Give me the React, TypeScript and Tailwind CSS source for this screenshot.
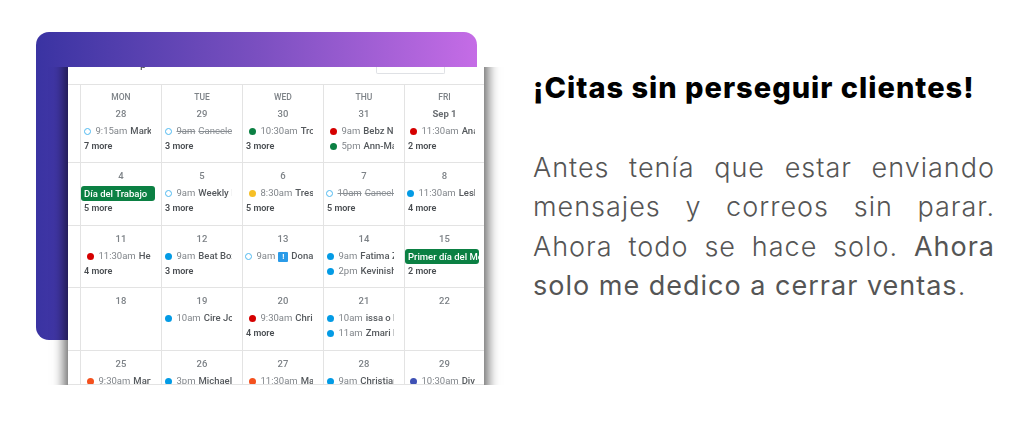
type Ev = { dot: string; ring?: boolean; time: string; title: string; at: number; strike?: boolean; alert?: boolean };
type Cell = { label?: string; day: string; bold?: boolean; chip?: string; events?: Ev[]; more?: string };

const blue = "#039be5";
const red = "#d50000";
const green = "#0b8043";
const orange = "#f4511e";
const sky = "#4fb8ef";

const rows: { h: string; cells: Cell[] }[] = [
  {
    h: "h-[78px]",
    cells: [
      { label: "MON", day: "28", events: [{ dot: sky, ring: true, time: "9:15am", title: "Mark Johnson", at: 7 }], more: "7 more" },
      { label: "TUE", day: "29", events: [{ dot: sky, ring: true, time: "9am", title: "Canceled event", at: 7, strike: true }], more: "3 more" },
      { label: "WED", day: "30", events: [{ dot: green, time: "10:30am", title: "Tro Williams", at: 10 }], more: "3 more" },
      { label: "THU", day: "31", events: [{ dot: red, time: "9am", title: "Bebz Nixon", at: 10 }, { dot: green, time: "5pm", title: "Ann-Marie", at: 10 }] },
      { label: "FRI", day: "Sep 1", bold: true, events: [{ dot: red, time: "11:30am", title: "Ana Maria", at: 9 }], more: "2 more" },
    ],
  },
  {
    h: "h-[63px]",
    cells: [
      { day: "4", chip: "Día del Trabajo", more: "5 more" },
      { day: "5", events: [{ dot: sky, ring: true, time: "9am", title: "Weekly Meeting", at: 7 }], more: "3 more" },
      { day: "6", events: [{ dot: "#f6bf26", time: "8:30am", title: "Tres Lopez", at: 10 }], more: "5 more" },
      { day: "7", events: [{ dot: sky, ring: true, time: "10am", title: "Canceled", at: 6, strike: true }], more: "5 more" },
      { day: "8", events: [{ dot: blue, time: "11:30am", title: "Leslie Ann", at: 6 }], more: "4 more" },
    ],
  },
  {
    h: "h-[62px]",
    cells: [
      { day: "11", events: [{ dot: red, time: "11:30am", title: "Henry Cole", at: 10 }], more: "4 more" },
      { day: "12", events: [{ dot: blue, time: "9am", title: "Beat Box Studio", at: 7 }], more: "3 more" },
      { day: "13", events: [{ dot: sky, ring: true, time: "9am", title: "Donald", at: 6, alert: true }] },
      { day: "14", events: [{ dot: blue, time: "9am", title: "Fatima Zahra", at: 7 }, { dot: blue, time: "2pm", title: "Kevinish", at: 7 }] },
      { day: "15", chip: "Primer día del Mes", more: "2 more" },
    ],
  },
  {
    h: "h-[63px]",
    cells: [
      { day: "18" },
      { day: "19", events: [{ dot: blue, time: "10am", title: "Cire Jones", at: 7 }] },
      { day: "20", events: [{ dot: red, time: "9:30am", title: "Chris Evans", at: 10 }], more: "4 more" },
      { day: "21", events: [{ dot: blue, time: "10am", title: "issa o Kim", at: 7 }, { dot: blue, time: "11am", title: "Zmari Khan", at: 7 }] },
      { day: "22" },
    ],
  },
  {
    h: "h-[34px]",
    cells: [
      { day: "25", events: [{ dot: orange, time: "9:30am", title: "Martin Ruiz", at: 10 }] },
      { day: "26", events: [{ dot: blue, time: "3pm", title: "Michael Reed", at: 7 }] },
      { day: "27", events: [{ dot: orange, time: "11:30am", title: "Maria Lee", at: 10 }] },
      { day: "28", events: [{ dot: blue, time: "9am", title: "Christian Ford", at: 7 }] },
      { day: "29", events: [{ dot: "#3f51b5", time: "10:30am", title: "Diva Stone", at: 9 }] },
    ],
  },
];

function EventRow({ e }: { e: Ev }) {
  return (
    <div className="flex h-[15px] w-[70px] items-center overflow-hidden whitespace-nowrap" style={{ paddingLeft: e.at - 4 }}>
      <span
        className="mr-[5px] h-[6.5px] w-[6.5px] shrink-0 rounded-full"
        style={e.ring ? { border: `1.2px solid ${e.dot}` } : { backgroundColor: e.dot }}
      />
      <span className={e.strike ? "flex items-center gap-[3px] text-[#8a8f94] line-through" : "flex items-center gap-[3px]"}>
        <span className="text-[#80858a]">{e.time}</span>
        {e.alert && (
          <span className="flex h-[10px] w-[10px] items-center justify-center rounded-[1px] bg-[#2a9be8] text-[8px] font-bold text-white">!</span>
        )}
        <span className={e.strike ? "text-[#8a8f94]" : "font-medium text-[#55595d]"}>{e.title}</span>
      </span>
    </div>
  );
}

function DayCell({ cell, last }: { cell: Cell; last: boolean }) {
  return (
    <div className={`overflow-hidden pt-[5px] ${last ? "" : "border-r border-[#e3e3e3]"}`}>
      {cell.label && <div className="h-[16px] text-center text-[8.5px] leading-[15px] font-medium text-[#7d8287]">{cell.label}</div>}
      <div className={`h-[15px] text-center text-[9.5px] leading-[15px] ${cell.bold ? "font-bold text-[#6a6e72]" : "font-medium text-[#7d8287]"}`}>
        {cell.day}
      </div>
      <div className="mt-[3px]">
        {cell.chip && (
          <div className="h-[15px] w-[74px] overflow-hidden rounded-[3px] bg-[#0b8043] pl-[3px] text-[9.5px] leading-[15px] font-medium whitespace-nowrap text-white">
            {cell.chip}
          </div>
        )}
        {cell.events?.map((e) => <EventRow key={e.time + e.title} e={e} />)}
        {cell.more && <div className="h-[15px] pl-[3px] text-[9px] leading-[15px] font-semibold text-[#4a4e52]">{cell.more}</div>}
      </div>
    </div>
  );
}

export default function App() {
  return (
    <div className="flex h-[427px] w-[1024px] items-start overflow-hidden bg-white">
      <div className="relative mt-[32px] ml-[36px] h-[308px] w-[441px] shrink-0 rounded-[13px] bg-gradient-to-r from-[#3a33a2] via-[#7a4fc0] to-[#c56ce6]">
        <div className="absolute top-[35px] left-[8px] h-[318px] w-[461px] overflow-hidden">
          <div className="-mt-[20px] ml-[24px] w-[416px] bg-white pt-[20px] pb-[20px] shadow-[0_0_11px_4px_rgba(0,0,0,0.6)]">
            <div className="h-[318px] overflow-hidden font-['Roboto',sans-serif] text-[9.5px] blur-[0.45px]">
              <div className="flex h-[18px] items-start border-b border-[#e3e3e3]">
                <span className="-mt-[9px] ml-[72px] text-[11px] leading-[14px] text-[#3c4043]">p</span>
                <span className="ml-[230px] h-[7px] w-[69px] rounded-b-[2px] border border-t-0 border-[#dfe1e5]" />
              </div>
              {rows.map((row) => (
                <div key={row.cells[0].day} className={`grid grid-cols-[13px_81px_81px_81px_81px_79px] border-b border-[#e3e3e3] ${row.h}`}>
                  <div className="border-r border-[#e3e3e3]" />
                  {row.cells.map((c, i) => (
                    <DayCell key={c.day} cell={c} last={i === 4} />
                  ))}
                </div>
              ))}
            </div>
          </div>
        </div>
      </div>
      <div className="mt-[70px] ml-[56px] w-[462px] shrink-0 font-['Inter',sans-serif]">
        <h2 className="text-[29px] leading-[36px] font-extrabold tracking-[1px] whitespace-nowrap text-black">¡Citas sin perseguir clientes!</h2>
        <p className="mt-[42px] text-justify text-[27px] leading-[39.3px] font-light tracking-[1px] text-[#555555]">
          Antes tenía que estar enviando mensajes y correos sin parar. Ahora todo se hace solo. <span className="font-normal">Ahora solo me dedico a cerrar ventas</span>.
        </p>
      </div>
    </div>
  );
}
